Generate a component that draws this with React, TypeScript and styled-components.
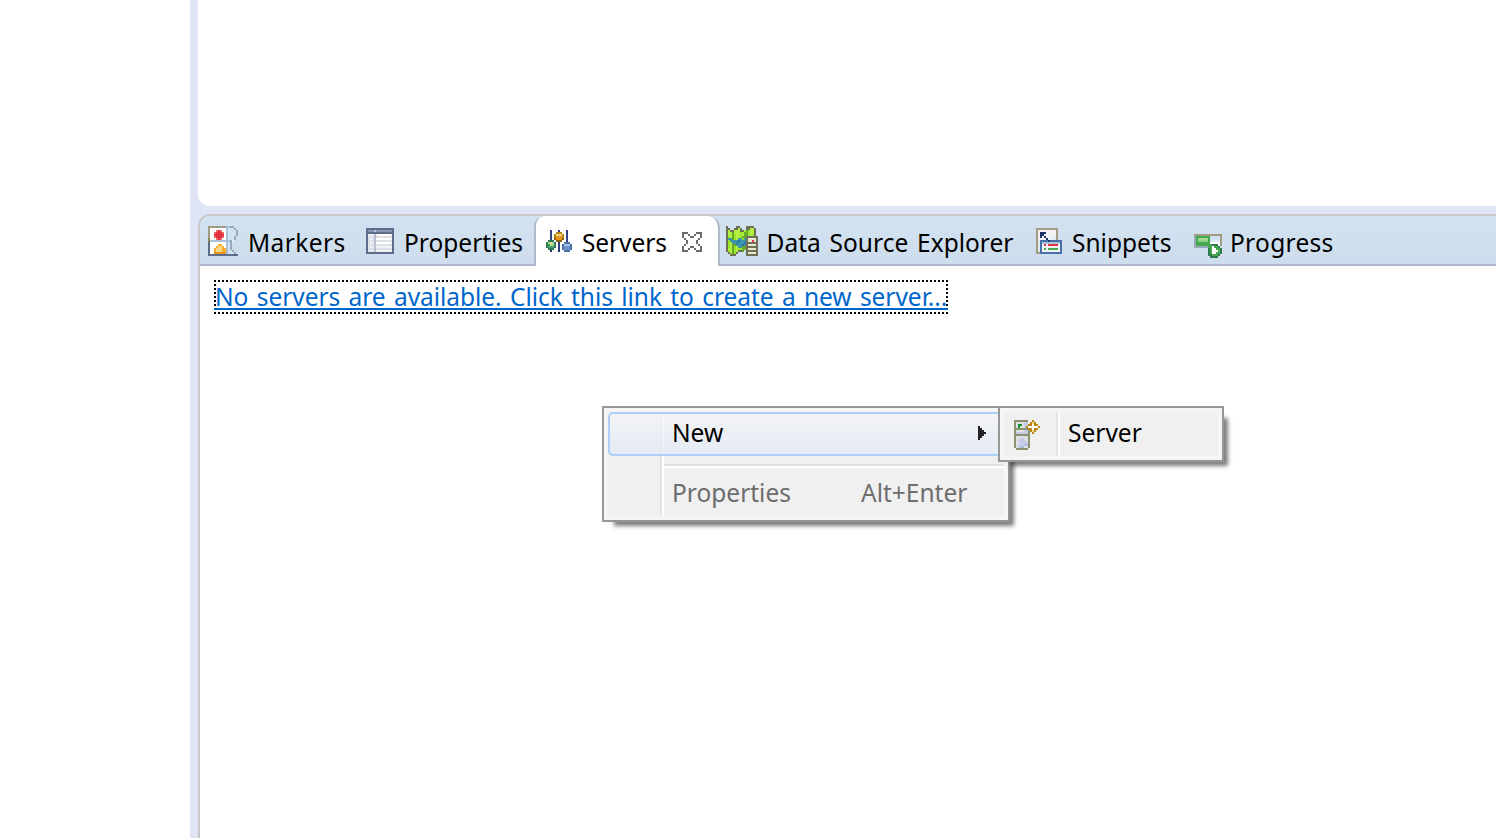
import React from "react";
import styled, { createGlobalStyle } from "styled-components";

const GlobalStyle = createGlobalStyle`
  *, *::before, *::after { box-sizing: border-box; }
  html, body { margin: 0; padding: 0; background: #fff; overflow: hidden; }
  body { font-family: "Noto Sans", "Open Sans", sans-serif; font-size: 24.5px; color: #000; }
`;

/* ---------- pixel icons: one character per 2px cell ---------- */

const palette: Record<string, string> = {
  g: "#a39c84", G: "#8a8a58", s: "#5f6d8c", S: "#8795b0", w: "#ffffff", W: "#f0f2f6",
  b: "#cfe3f3", B: "#e3edf7", l: "#a8c0dc", c: "#98a8b8", r: "#e2333f", R: "#ee6a66",
  o: "#f9b02e", O: "#e8941f", n: "#34427e", k: "#1c2f66", y: "#f6d88a", Y: "#b8860b",
  d: "#8a6410", e: "#2f7a52", E: "#a5d890", f: "#4a9a70", u: "#4a70a8", U: "#a8c4e4",
  v: "#6d93c4", m: "#9ae62a", M: "#b4f044", p: "#6aa82c", q: "#6f6f55", t: "#3a96a8",
  z: "#e8e8d0", h: "#6b6b6b", i: "#dfe3ec", j: "#c5cce6", x: "#46a84e", X: "#8fcf88",
  a: "#8b9270", A: "#12902c", T: "#dde1e4", D: "#2f6fa8", P: "#dcdfe6", C: "#b8bfd0",
};

const art = {
  markers: [
    "gggggggggllcc..",
    "gwwwwwwwwlbbbc.",
    "gwwwRrRwwlbbbbc",
    "gwwRrrrRwlbbbbc",
    "gwwrrrrrwlbbbbc",
    "gwwRrrrRwlbbbc.",
    "GwwwRrRwwlbbbc.",
    "GllllllllllcB..",
    "swwwwwwwwlbc...",
    "swwwwoowwlbc...",
    "swwwoyyowlbc...",
    "swwoyyyoolbc...",
    "swwoyyyoolbbc..",
    "swwOOOOOOlbbbc.",
    "sssssssssssssss",
  ],
  properties: [
    "ssssssssssssss",
    "sSSSCSSSSSSSSs",
    "ssssssssssssss",
    "sWWWCWwwwwwwWs",
    "siPiCPPPPPPPPs",
    "siWiCwwwwwwwWs",
    "siPiCPPPPPPPPs",
    "siWiCwwwwwwwWs",
    "siPiCPPPPPPPPs",
    "siWiCWWWWWWWWs",
    "siPiCPPPPPPPPs",
    "siWiCWWWWWWWWs",
    "ssssssssssssss",
  ],
  servers: [
    "..n...n...n..",
    "..n..YYY..n..",
    "..n.YyyyY.n..",
    "..n.YOOOY.n..",
    "..n.dOOOd.n..",
    ".eee.ddd..n..",
    "eEyEe.n..uuu.",
    "exEEe.n.uUUUu",
    "efffe.n.uvvvu",
    ".eee..n.uvvvu",
    "..k...k..uuu.",
  ],
  close: [
    "hhh....hhh",
    "h..h..h..h",
    "h...hh...h",
    ".h......h.",
    "..h....h..",
    "..h....h..",
    ".h......h.",
    "h...hh...h",
    "h..h..h..h",
    "hhh....hhh",
  ],
  data: [
    "q....qq...qqqq..",
    "qq..qqMq..qqMMq.",
    "qMqqMMMqqMpmMMq.",
    "qMMpMMMmMppmMMq.",
    "qMMpmMMmMppmMmq.",
    "qmMpmMMmppqqqqqq",
    "qttpmMttmtqzzzzq",
    "qmttttDtttqzzrzq",
    "qmMttDtttDqqqqqq",
    "qmMpptttDtqzzzzq",
    "qmMpmMttppqqqqqq",
    "qMMpmMmmppqzzzzq",
    "qmMpmMqqp.qqqqqq",
    ".qmpmq....qzzzzq",
    "..qqq.....qqqqqq",
  ],
  snippets: [
    "ggggggggggg..",
    "gWWWWWWWWWg..",
    "gWkkkWWWWWg..",
    "gWkkWWWWWWg..",
    "gWkWkWWWWBg..",
    "gWWWWkWBBBg..",
    "gBuuuukuuuuuu",
    "gBuUUUUUUUUUu",
    "gBuWrWrrrrrWu",
    "gBuWWWWWWWWWu",
    "gBuWxWxxxxxWu",
    "gBuWWWWWWWWWu",
    "gguuuuuuuuuuu",
  ],
  progress: [
    "gggggggggggggg",
    "cxxxxxxxbbbbbg",
    "cxEEEEExbbbbbg",
    "cxXXXXXxbBBBBg",
    "cxxxxxxxwwwwwg",
    "cxxxxxxxxeeewg",
    "cccccccxxwxxe.",
    ".......exwwxxe",
    ".......exwwwxe",
    ".......exwwxxe",
    ".......eexxxe.",
    "........eeee..",
  ],
  newServer: [
    "aaaaaaa..Y...",
    "aTTTTjj.YyY..",
    "aTAATjjYYwYY.",
    "aTATTjYwwwwwY",
    "aaaaaaaYYwYY.",
    "aTTTTjjaYyY..",
    "ajjjjjja.Y...",
    "aaaaaaaa.....",
    "aTTTTTTa.....",
    "aTTjjTTa.....",
    "aTjjjjTa.....",
    "aTTjjjja.....",
    "aTjjjlla.....",
    "aTjllTTa.....",
    ".aaaaaa......",
  ],
  arrow: ["k...", "kk..", "kkk.", "kkkk", "kkk.", "kk..", "k..."],
};

const IconSvg = styled.svg<{ $top?: number }>`
  display: block;
  flex: none;
  margin-top: ${(p) => p.$top ?? 0}px;
  shape-rendering: crispEdges;
`;

function PixelIcon({ name, top, ink }: { name: keyof typeof art; top?: number; ink?: string }) {
  const rows = art[name];
  const w = rows[0].length;
  const cells: React.ReactNode[] = [];
  rows.forEach((row, y) => {
    let x = 0;
    while (x < row.length) {
      const ch = row[x];
      let end = x + 1;
      while (end < row.length && row[end] === ch) end++;
      if (ch !== ".") {
        cells.push(<rect key={`${x}-${y}`} x={x} y={y} width={end - x} height={1} fill={ink ?? palette[ch]} />);
      }
      x = end;
    }
  });
  return (
    <IconSvg $top={top} width={w * 2} height={rows.length * 2} viewBox={`0 0 ${w} ${rows.length}`} aria-hidden>
      {cells}
    </IconSvg>
  );
}

/* ---------- workbench frame ---------- */

const Workbench = styled.div`
  display: flex;
  width: 1496px;
  height: 838px;
  overflow: hidden;
  background: #fff;
`;
const SidePane = styled.aside`
  flex: none;
  width: 190px;
  background: #fff;
`;
const MainArea = styled.main`
  flex: 1;
  min-width: 0;
  display: flex;
  flex-direction: column;
  gap: 8px;
  padding-left: 8px;
  background: #e0e5f5;
`;
const EditorPane = styled.section`
  flex: none;
  height: 206px;
  background: #fff;
  border-bottom-left-radius: 12px;
`;
const ViewStack = styled.section`
  flex: 1;
  display: flex;
  flex-direction: column;
  border: solid #c8c8ca;
  border-width: 2px 0 0 2px;
  border-top-left-radius: 12px;
  background: #fff;
  overflow: hidden;
`;
const TabBar = styled.nav`
  flex: none;
  display: flex;
  height: 50px;
  background: linear-gradient(#d3e2f0, #cddded);
`;
const Tab = styled.div<{ $width: number; $pad: number; $active?: boolean }>`
  flex: none;
  display: flex;
  align-items: flex-start;
  width: ${(p) => p.$width}px;
  height: 50px;
  padding-left: ${(p) => p.$pad}px;
  border-bottom: 2px solid #b0b4cc;
  ${(p) =>
    p.$active &&
    `
    background: #fff;
    border: solid #b0b8cc;
    border-width: 0 2px;
    border-radius: 10px 12px 0 0;
  `}
`;
const TabFill = styled.div`
  flex: 1;
  border-bottom: 2px solid #b0b4cc;
`;
const TabLabel = styled.span<{ $gap: number; $track?: number; $word?: number }>`
  margin: 9px 0 0 ${(p) => p.$gap}px;
  line-height: 36px;
  white-space: nowrap;
  letter-spacing: ${(p) => p.$track ?? 0}px;
  word-spacing: ${(p) => p.$word ?? 0}px;
`;
const CloseButton = styled.span`
  margin: 16px 0 0 auto;
  padding-right: 16px;
`;

/* ---------- view content ---------- */

const ViewBody = styled.div`
  flex: 1;
  padding: 14px 0 0 14px;
`;
const dotsX = "repeating-linear-gradient(90deg, #000 0 2px, transparent 2px 4px)";
const dotsY = "repeating-linear-gradient(180deg, #000 0 2px, transparent 2px 4px)";
const FocusLink = styled.a`
  display: block;
  width: 734px;
  height: 34px;
  padding: 2px 0 0 0;
  background:
    ${dotsX} 0 0 / 100% 2px no-repeat,
    ${dotsX} 0 100% / 100% 2px no-repeat,
    ${dotsY} 0 0 / 2px 100% no-repeat,
    ${dotsY} 100% 0 / 2px 100% no-repeat;
  color: #0066cc;
  text-decoration: none;
  cursor: pointer;
`;
const LinkText = styled.span`
  display: block;
  height: 28px;
  padding-left: 1px;
  border-bottom: 2px solid #0066cc;
  line-height: 30px;
  white-space: nowrap;
  letter-spacing: -0.04px;
  word-spacing: 2px;
`;

/* ---------- context menu ---------- */

const MenuFrame = styled.div<{ $x: number; $y: number; $w: number; $h: number }>`
  position: absolute;
  left: ${(p) => p.$x}px;
  top: ${(p) => p.$y}px;
  width: ${(p) => p.$w}px;
  height: ${(p) => p.$h}px;
  padding: 4px;
  border: 2px solid #979797;
  background: #f5f5f5;
  box-shadow: 8px 8px 4px -4px rgba(0, 0, 0, 0.5);
`;
const MenuInner = styled.div<{ $gutter: number }>`
  display: flex;
  flex-direction: column;
  height: 100%;
  background: linear-gradient(90deg, #e2e3e3 50%, #fff 50%) ${(p) => p.$gutter}px 0 / 4px 100% no-repeat #f0f0f0;
`;
const MenuItem = styled.div<{ $hot?: boolean; $muted?: boolean; $indent: number }>`
  flex: none;
  display: flex;
  align-items: flex-start;
  height: 44px;
  padding-left: ${(p) => p.$indent}px;
  border: 2px solid transparent;
  line-height: 36px;
  white-space: nowrap;
  color: ${(p) => (p.$muted ? "#6d6d6d" : "#000")};
  ${(p) =>
    p.$hot &&
    `
    border-color: #aecff7;
    border-radius: 5px;
    background: linear-gradient(rgba(243,244,247,.75), rgba(225,234,246,.75));
  `}
`;
const MenuText = styled.span<{ $gap?: number }>`
  margin: 1px 0 0 ${(p) => p.$gap ?? 0}px;
`;
const Separator = styled.div`
  flex: none;
  height: 4px;
  margin: 8px 0 4px 56px;
  border-top: 2px solid #e0e0e0;
  border-bottom: 2px solid #fff;
`;
const ArrowSlot = styled.span`
  margin: 12px 16px 0 auto;
`;

export default function App() {
  return (
    <>
      <GlobalStyle />
      <Workbench>
        <SidePane />
        <MainArea>
          <EditorPane />
          <ViewStack>
            <TabBar>
              <Tab $width={158} $pad={8}>
                <PixelIcon name="markers" top={10} />
                <TabLabel $gap={10} $track={0.4}>Markers</TabLabel>
              </Tab>
              <Tab $width={176} $pad={8}>
                <PixelIcon name="properties" top={12} />
                <TabLabel $gap={10}>Properties</TabLabel>
              </Tab>
              <Tab $width={186} $pad={10} $active>
                <PixelIcon name="servers" top={14} />
                <TabLabel $gap={10} $track={-0.1}>Servers</TabLabel>
                <CloseButton><PixelIcon name="close" /></CloseButton>
              </Tab>
              <Tab $width={308} $pad={6}>
                <PixelIcon name="data" top={10} />
                <TabLabel $gap={8.5} $word={2.5}>Data Source Explorer</TabLabel>
              </Tab>
              <Tab $width={158} $pad={8}>
                <PixelIcon name="snippets" top={12} />
                <TabLabel $gap={10}>Snippets</TabLabel>
              </Tab>
              <Tab $width={160} $pad={8}>
                <PixelIcon name="progress" top={18} />
                <TabLabel $gap={8} $track={0.3}>Progress</TabLabel>
              </Tab>
              <TabFill />
            </TabBar>
            <ViewBody>
              <FocusLink>
                <LinkText>No servers are available. Click this link to create a new server...</LinkText>
              </FocusLink>
            </ViewBody>
          </ViewStack>
        </MainArea>
      </Workbench>

      <MenuFrame $x={602} $y={406} $w={408} $h={116}>
        <MenuInner $gutter={52}>
          <MenuItem $hot $indent={62}>
            <MenuText>New</MenuText>
            <ArrowSlot><PixelIcon name="arrow" ink="#222" /></ArrowSlot>
          </MenuItem>
          <Separator />
          <MenuItem $muted $indent={62}>
            <MenuText>Properties</MenuText>
            <MenuText $gap={70}>Alt+Enter</MenuText>
          </MenuItem>
        </MenuInner>
      </MenuFrame>

      <MenuFrame $x={998} $y={406} $w={226} $h={56}>
        <MenuInner $gutter={52}>
          <MenuItem $indent={8}>
            <PixelIcon name="newServer" top={6} />
            <MenuText $gap={28}>Server</MenuText>
          </MenuItem>
        </MenuInner>
      </MenuFrame>
    </>
  );
}
